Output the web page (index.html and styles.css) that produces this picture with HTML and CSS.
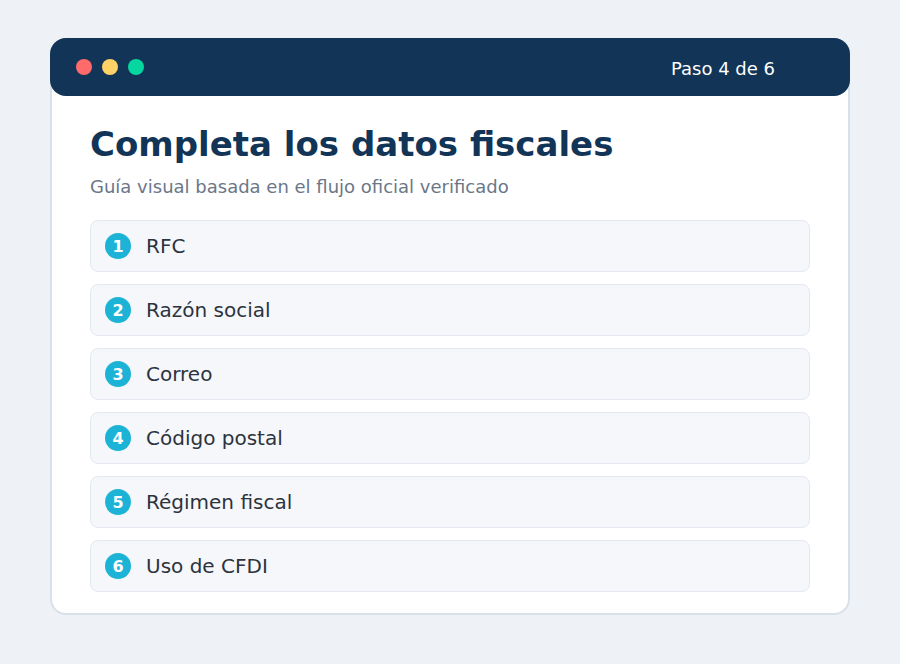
FILE: index.html
```html
<!DOCTYPE html>
<html>
<head>
    <meta charset="utf-8">
    <link rel="stylesheet" href="styles.css">
    <title>Datos fiscales</title>
</head>
<body>
    <div class="card">
        <div class="topbar">
            <div class="dots">
                <span class="dot red"></span>
                <span class="dot yellow"></span>
                <span class="dot green"></span>
            </div>
            <div class="step">Paso 4 de 6</div>
        </div>
        <div class="content">
            <h1>Completa los datos fiscales</h1>
            <p class="subtitle">Guía visual basada en el flujo oficial verificado</p>
            <ul class="fields">
                <li><span class="num">1</span>RFC</li>
                <li><span class="num">2</span>Razón social</li>
                <li><span class="num">3</span>Correo</li>
                <li><span class="num">4</span>Código postal</li>
                <li><span class="num">5</span>Régimen fiscal</li>
                <li><span class="num">6</span>Uso de CFDI</li>
            </ul>
        </div>
    </div>
</body>
</html>
```

FILE: styles.css
```css
body {
    margin: 0;
    background-color: #eef2f6;
    font-family: 'DejaVu Sans', sans-serif;
    padding: 38px 50px;
}
.card {
    background-color: #fff;
    border: 2px solid #d8e0ea;
    border-radius: 16px;
    height: 577px;
    box-sizing: border-box;
}
.topbar {
    margin: -2px -2px 0;
    height: 58px;
    background-color: #113457;
    border-radius: 16px;
    display: flex;
    align-items: center;
    justify-content: space-between;
    padding: 0 75px 0 26px;
}
.dots {
    display: flex;
    gap: 10px;
}
.dot {
    width: 16px;
    height: 16px;
    border-radius: 50%;
}
.red { background-color: #ff6b6b; }
.yellow { background-color: #ffd166; }
.green { background-color: #06d6a0; }
.step {
    color: #fff;
    font-size: 18px;
    padding-top: 3px;
}
.content {
    padding: 26px 38px 0;
}
h1 {
    margin: 0;
    color: #113457;
    font-size: 34px;
    font-weight: bold;
    line-height: 44px;
}
.subtitle {
    margin: 10px 0 22px;
    color: #6b7788;
    font-size: 18px;
    line-height: 22px;
}
.fields {
    list-style-type: none;
    margin: 0;
    padding: 0;
    display: flex;
    flex-direction: column;
    gap: 12px;
}
.fields li {
    height: 52px;
    box-sizing: border-box;
    background-color: #f5f7fb;
    border: 1px solid #e3e8f0;
    border-radius: 8px;
    display: flex;
    align-items: center;
    padding-left: 14px;
    color: #2c333d;
    font-size: 20px;
}
.num {
    width: 26px;
    height: 26px;
    border-radius: 50%;
    background-color: #1cb3d6;
    color: #fff;
    font-size: 16px;
    font-weight: bold;
    display: flex;
    align-items: center;
    justify-content: center;
    margin-right: 15px;
}
```
